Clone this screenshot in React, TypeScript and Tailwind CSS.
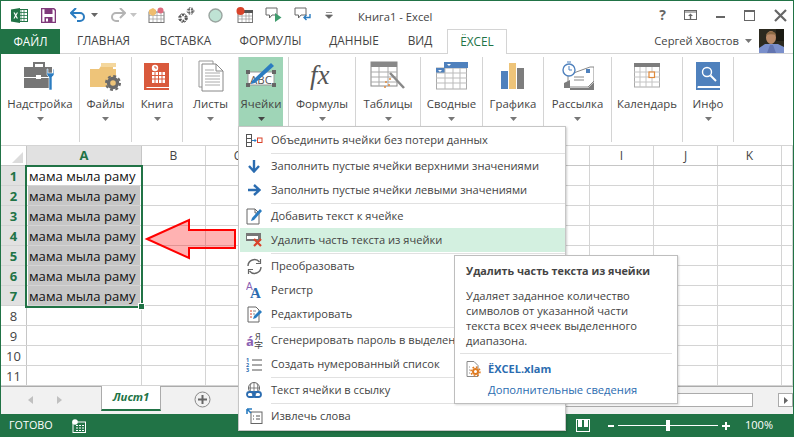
import { ReactNode } from "react";

function ExcelLogo() {
  return (
    <svg width="17" height="15" viewBox="0 0 17 15">
      <rect x="7" y="1.5" width="9.5" height="12" fill="#fff" stroke="#217346" />
      <path d="M10 1.5v12M13 1.5v12M7 4.5h9.5M7 7.5h9.5M7 10.5h9.5" stroke="#217346" strokeWidth="0.8" />
      <path d="M0 1.5 9 0v15L0 13.5z" fill="#217346" />
      <path d="M2.5 4.5 4 7.5 2.5 10.5h1.3l.9-2 .9 2H7L5.4 7.5 7 4.5H5.7l-.9 2-.9-2z" fill="#fff" />
    </svg>
  );
}

function SaveIcon() {
  return (
    <svg width="15" height="15" viewBox="0 0 15 15">
      <path d="M0.5 0.5h12l2 2v12h-14z" fill="#fff" stroke="#80397b" strokeWidth="1.6" />
      <rect x="3.5" y="1" width="8" height="5" fill="#80397b" />
      <rect x="3.5" y="9" width="8" height="5.5" fill="#80397b" />
      <rect x="5" y="10.5" width="2" height="3" fill="#fff" />
    </svg>
  );
}

function UndoIcon({ color }: { color: string }) {
  return (
    <svg width="16" height="14" viewBox="0 0 16 14">
      <path d="M1 5h9a4 4 0 0 1 0 8H7" fill="none" stroke={color} strokeWidth="2" />
      <path d="M6 0 1 5l5 5" fill="none" stroke={color} strokeWidth="2" />
    </svg>
  );
}

function TinyCaret({ color = "#666" }: { color?: string }) {
  return (
    <svg width="7" height="4" viewBox="0 0 7 4">
      <path d="M0 0h7L3.5 4z" fill={color} />
    </svg>
  );
}

function QuickIcons() {
  return (
    <div className="flex items-center">
      <div className="w-[10px]" />
      <ExcelLogo />
      <div className="w-[13px]" />
      <SaveIcon />
      <div className="w-[14px]" />
      <UndoIcon color="#2b7cc0" />
      <div className="w-[5px]" />
      <TinyCaret />
      <div className="w-[12px]" />
      <div className="-scale-x-100">
        <UndoIcon color="#b4b4b4" />
      </div>
      <div className="w-[4px]" />
      <TinyCaret color="#c4c4c4" />
      <div className="w-[11px]" />
      <svg width="17" height="16" viewBox="0 0 17 16">
        <rect x="1" y="5" width="15" height="10.5" fill="#fff" stroke="#777" />
        <path d="M1 8.5h15M1 12h15M5 5v10M9 5v10M13 5v10" stroke="#999" strokeWidth="0.7" />
        <path d="M1 3l4-2 3 2v4l-3 2-4-2z" fill="#eebc6d" />
        <circle cx="12.5" cy="3.5" r="3" fill="#dd6b7e" />
      </svg>
      <div className="w-[13px]" />
      <svg width="17" height="16" viewBox="0 0 17 16">
        <circle cx="5" cy="11" r="3" fill="none" stroke="#555" strokeWidth="2.5" strokeDasharray="2 1.2" />
        <circle cx="5" cy="11" r="4.3" fill="none" stroke="#555" strokeWidth="1" strokeDasharray="2 1.4" />
        <circle cx="12.5" cy="4" r="2" fill="none" stroke="#666" strokeWidth="2" strokeDasharray="2 1" />
        <circle cx="12.5" cy="4" r="3.4" fill="none" stroke="#666" strokeWidth="1" strokeDasharray="1.6 1.2" />
      </svg>
      <div className="w-[13px]" />
      <svg width="15" height="15" viewBox="0 0 15 15">
        <circle cx="7.5" cy="7.5" r="6.5" fill="#bfe3d4" stroke="#9aa5a0" strokeWidth="1.4" />
      </svg>
      <div className="w-[13px]" />
      <svg width="17" height="16" viewBox="0 0 17 16">
        <rect x="2" y="4" width="14.5" height="11.5" fill="#fff" stroke="#777" />
        <rect x="8" y="3" width="9" height="3" fill="#555" />
        <path d="M2 9h14M2 12h14M6 6v9M10 6v9M13 6v9" stroke="#999" strokeWidth="0.7" />
        <circle cx="4.5" cy="4" r="4" fill="#d9432a" />
      </svg>
      <div className="w-[12px]" />
      <svg width="17" height="16" viewBox="0 0 17 16">
        <path d="M1 1h11v7H7l-2.500 3V8H1z" fill="#fff" stroke="#666" />
        <path d="M10 6l6.500 4.500L10 15z" fill="#3f9c6d" />
      </svg>
      <div className="w-[12px]" />
      <svg width="17" height="16" viewBox="0 0 17 16">
        <path d="M1 1h11v7H7l-2.500 3V8H1z" fill="#fff" stroke="#666" />
        <path d="M16 7v3.500H10M12.500 8 10 10.500l2.500 2.500" fill="none" stroke="#2b7cc0" strokeWidth="1.400" />
      </svg>
      <div className="w-[14px]" />
      <svg width="8" height="8" viewBox="0 0 8 8">
        <path d="M1 1.500h6M0.500 4h7L4 7.500z" fill="#666" stroke="#666" strokeWidth="0.700" />
      </svg>
    </div>
  );
}

function TitleBar() {
  return (
    <div className="relative flex h-[28px] items-center justify-between">
      <QuickIcons />
      <div className="absolute left-[357px] top-[7px] text-[11.2px] leading-[18px] text-[#444]">Книга1 - Excel</div>
      <div className="flex items-center">
        <span className="mr-[18px] text-[14px] font-bold leading-none text-[#666]">?</span>
        <svg className="mr-[19px]" width="13" height="10" viewBox="0 0 13 10">
          <rect x="0.500" y="0.500" width="12" height="9" fill="none" stroke="#666" />
          <path d="M0.500 2h12" stroke="#666" />
          <path d="M6.500 3.500 4 6h5zM5.800 6h1.400v3H5.800z" fill="#666" />
        </svg>
        <div className="mr-[19px] mt-[3px] h-[2px] w-[9px] bg-[#666]" />
        <div className="mr-[19px] h-[11px] w-[11px] border border-t-2 border-[#666]" />
        <svg className="mr-[6px]" width="13" height="13" viewBox="0 0 13 13">
          <path d="M1 1l11 11M12 1 1 12" stroke="#666" strokeWidth="2.200" />
        </svg>
      </div>
    </div>
  );
}

function Avatar() {
  return (
    <svg width="25" height="24" viewBox="0 0 25 24">
      <rect width="25" height="24" fill="#2c2a1f" />
      <rect x="17" width="8" height="12" fill="#1b1a12" />
      <path d="M0 24v-5l6-4h13l6 3v6z" fill="#7a8fcb" />
      <path d="M8 24l3-8h3l3 8z" fill="#6274b0" />
      <ellipse cx="12" cy="8.500" rx="5" ry="6.500" fill="#b98a68" />
      <path d="M7 6c1-4 9-5 10 0-3-1-7-1-10 0z" fill="#8c6a45" />
    </svg>
  );
}

function TabBar() {
  const tabs = [
    { label: "ГЛАВНАЯ", width: "w-[83px]" },
    { label: "ВСТАВКА", width: "w-[81px]" },
    { label: "ФОРМУЛЫ", width: "w-[89px]" },
    { label: "ДАННЫЕ", width: "w-[78px]" },
    { label: "ВИД", width: "w-[54px]" },
  ];
  return (
    <div className="flex h-[25px] items-stretch border-b border-[#d4d4d4]">
      <div className="flex h-[25px] w-[59px] items-center justify-center bg-[#217346] text-[11.800px] text-white">ФАЙЛ</div>
      <div className="w-[2px]" />
      {tabs.map((t) => (
        <div key={t.label} className={`${t.width} flex items-center justify-center text-[11.800px] text-[#444]`}>
          {t.label}
        </div>
      ))}
      <div className="z-10 flex h-[25px] w-[60px] items-center justify-center border border-b-0 border-[#d4d4d4] bg-white text-[11.800px] text-[#217346]">
        ЁXCEL
      </div>
      <div className="flex flex-1 items-center justify-end">
        <span className="mr-[6px] text-[11.200px] text-[#444]">Сергей Хвостов</span>
        <span className="mr-[7px]"><TinyCaret color="#777" /></span>
        <span className="mr-[9px] block h-[24px]"><Avatar /></span>
      </div>
    </div>
  );
}

const ribbonIcons: Record<string, ReactNode> = {
  "Надстройка": (
    <svg width="32" height="30" viewBox="0 0 32 30">
      <path d="M10 6V2h10v4" fill="none" stroke="#767676" strokeWidth="2" />
      <rect x="0" y="6" width="28" height="10" fill="#767676" />
      <rect x="0" y="17" width="28" height="10" fill="#767676" />
      <rect x="12" y="14" width="5" height="4" fill="#fff" />
      <path d="M23 8v6l2 2v13h3V16l2-2V8h-1v4h-5V8z" fill="#2b7cc0" stroke="#fff" strokeWidth="0.600" />
    </svg>
  ),
  "Файлы": (
    <svg width="32" height="30" viewBox="0 0 32 30">
      <path d="M0 8h9l2-3h12v3h3v18H0z" fill="#eec479" />
      <rect x="11" y="2" width="15" height="4" fill="#f4d79d" />
      <circle cx="23" cy="22" r="4.500" fill="none" stroke="#6a6a6a" strokeWidth="3.400" />
      <circle cx="23" cy="22" r="7" fill="none" stroke="#6a6a6a" strokeWidth="2" strokeDasharray="3 2.500" />
    </svg>
  ),
  "Книга": (
    <svg width="26" height="30" viewBox="0 0 26 30">
      <path d="M0 2h25v24H3a2 2 0 0 0-1 1h23v2H0z" fill="#d9593c" />
      <circle cx="11" cy="7" r="3.200" fill="#fff" />
      <path d="M11 5v2h2" stroke="#d9593c" fill="none" />
      <rect x="8" y="11" width="13" height="11" fill="#fff" />
      <path d="M11 11v11M14.500 11v11M18 11v11M8 14.500h13M8 18h13" stroke="#d9593c" />
    </svg>
  ),
  "Листы": (
    <svg width="26" height="32" viewBox="0 0 26 32">
      <path d="M1 1h14v3M1 1v26h3" fill="none" stroke="#999" />
      <path d="M4 4h14l7 7v20H4z" fill="#fff" stroke="#888" />
      <path d="M18 4v7h7" fill="none" stroke="#888" />
      <path d="M7 10h9M7 13h15M7 16h15M7 19h15M7 22h15M7 25h15" stroke="#aaa" />
    </svg>
  ),
  "Ячейки": (
    <svg width="34" height="30" viewBox="0 0 34 30">
      <rect x="4" y="11" width="26" height="13" fill="#fff" stroke="#999" />
      <rect x="2" y="9" width="4" height="4" fill="#666" />
      <rect x="28" y="9" width="4" height="4" fill="#666" />
      <rect x="2" y="22" width="4" height="4" fill="#666" />
      <rect x="28" y="22" width="4" height="4" fill="#666" />
      <text x="17" y="22.500" textAnchor="middle" fontSize="11.500" fill="#555" fontFamily="'Open Sans',sans-serif">ABC</text>
      <path d="M8 20 27 2l3 3-19 17-4 1z" fill="#2b7cc0" />
    </svg>
  ),
  "Формулы": (
    <svg width="26" height="32" viewBox="0 0 26 32">
      <text x="1" y="24" fontSize="27" fontStyle="italic" fontFamily="'Liberation Serif',serif" fill="#555">fx</text>
    </svg>
  ),
  "Таблицы": (
    <svg width="36" height="32" viewBox="0 0 36 32">
      <rect x="1" y="2" width="26" height="24" fill="#fff" stroke="#888" />
      <rect x="1" y="2" width="26" height="5" fill="#888" />
      <path d="M1 12h26M1 17h26M1 22h26M9 7v19M18 7v19" stroke="#aaa" />
      <path d="M20 13l14 15" stroke="#888" strokeWidth="2.500" />
      <circle cx="16" cy="22" r="1" fill="#e08a3c" />
      <circle cx="19" cy="25" r="1" fill="#e08a3c" />
      <circle cx="15" cy="27" r="1" fill="#e08a3c" />
      <circle cx="20" cy="19" r="1" fill="#e08a3c" />
    </svg>
  ),
  "Сводные": (
    <svg width="32" height="28" viewBox="0 0 32 28">
      <rect x="0.500" y="6" width="30" height="21" fill="#fff" stroke="#aaa" />
      <rect x="0" y="6" width="9" height="5" fill="#4f81bd" />
      <rect x="8" y="0" width="24" height="6" fill="#4f81bd" />
      <path d="M9 6v21M17 6v21M24 6v21M0 11h31M0 16h31M0 21h31" stroke="#bbb" />
      <path d="M2 8h4L4 10zM11 2h4l-2 2z" fill="#fff" />
    </svg>
  ),
  "Графика": (
    <svg width="24" height="28" viewBox="0 0 24 28">
      <rect x="0" y="9" width="7" height="18" fill="#4f81bd" />
      <rect x="8" y="1" width="7" height="26" fill="#eec479" />
      <rect x="16" y="6" width="7" height="21" fill="#7d7d7d" />
    </svg>
  ),
  "Рассылка": (
    <svg width="32" height="30" viewBox="0 0 32 30">
      <path d="M6 14 28 6l4 0v14l-6 6H6z" fill="#fff" stroke="#888" />
      <rect x="24" y="8" width="4" height="4" fill="#4f81bd" />
      <path d="M12 16h10M12 19h10" stroke="#888" />
      <path d="M2 22l6-3v8H2zM8 27h18l6-6v8H8z" fill="#7d7d7d" />
      <circle cx="7" cy="9" r="6" fill="#fff" stroke="#4f81bd" strokeWidth="1.400" />
      <path d="M7 5v4h3M5 1h4" stroke="#4f81bd" fill="none" />
    </svg>
  ),
  "Календарь": (
    <svg width="26" height="25" viewBox="0 0 26 25">
      <rect x="0.500" y="1" width="25" height="23" fill="#fff" stroke="#aaa" />
      <rect x="0" y="0" width="26" height="4" fill="#7d7d7d" />
      <path d="M6 4v20M12 4v20M18 4v20M0 9h26M0 14h26M0 19h26" stroke="#c4c4c4" />
      <rect x="15" y="9" width="5.500" height="5.500" fill="#fff" stroke="#e08a3c" strokeWidth="1.200" />
    </svg>
  ),
  "Инфо": (
    <svg width="24" height="28" viewBox="0 0 24 28">
      <path d="M0 0h24v24H2a2 2 0 0 0-.500 2H24v2H0z" fill="#4f81bd" />
      <circle cx="11" cy="10" r="4.500" fill="none" stroke="#fff" strokeWidth="1.400" />
      <path d="M14.500 13.500 20 19" stroke="#fff" strokeWidth="2" />
    </svg>
  ),
};

const ribbonItems = [
  { label: "Надстройка", width: "w-[79px]" },
  { label: "Файлы", width: "w-[52px]" },
  { label: "Книга", width: "w-[51px]" },
  { label: "Листы", width: "w-[56px]" },
  { label: "Ячейки", width: "w-[50px]", active: true },
  { label: "Формулы", width: "w-[67px]" },
  { label: "Таблицы", width: "w-[65px]" },
  { label: "Сводные", width: "w-[62px]" },
  { label: "Графика", width: "w-[61px]" },
  { label: "Рассылка", width: "w-[68px]" },
  { label: "Календарь", width: "w-[71px]", noCaret: true },
  { label: "Инфо", width: "w-[51px]" },
];

function Ribbon() {
  return (
    <div className="flex h-[92px] border-b border-[#d4d4d4] pt-[3px]">
      {ribbonItems.map((item) => (
        <div key={item.label} className={`${item.width} h-[85px] border-r border-[#d4d4d4]`}>
          <div className={`flex h-[69px] flex-col items-center ${item.active ? "mr-[5px] bg-[#9fd5b7]" : ""}`}>
            <div className="flex h-[37px] items-center justify-center">{ribbonIcons[item.label]}</div>
            <div className="mt-[1px] text-[11.400px] leading-[18px] text-[#444]">{item.label}</div>
            {!item.noCaret && (
              <div className="mt-[4px] flex">
                <TinyCaret color={item.active ? "#444" : "#777"} />
              </div>
            )}
          </div>
        </div>
      ))}
    </div>
  );
}

const columns = [
  { label: "B", width: "w-[64px]" },
  { label: "C", width: "w-[64px]" },
  { label: "D", width: "w-[64px]" },
  { label: "E", width: "w-[64px]" },
  { label: "F", width: "w-[64px]" },
  { label: "G", width: "w-[64px]" },
  { label: "H", width: "w-[64px]" },
  { label: "I", width: "w-[64px]" },
  { label: "J", width: "w-[64px]" },
  { label: "K", width: "w-[64px]" },
  { label: "", width: "flex-1" },
];

function Sheet() {
  const rows = [1, 2, 3, 4, 5, 6, 7, 8, 9, 10, 11];
  return (
    <div className="relative">
      <div className="flex h-[20px] border-b border-[#c6c6c6]">
        <div className="relative w-[26px] border-r border-[#c6c6c6]">
          <div className="absolute bottom-[2px] right-[3px] h-0 w-0 border-b-[11px] border-l-[11px] border-b-[#dcdcdc] border-l-transparent" />
        </div>
        <div className="flex w-[115px] items-center justify-center border-r border-[#c6c6c6] bg-[#e1e1e1] pt-[1px] text-[13px] font-bold text-[#217346]">
          A
        </div>
        {columns.map((c) => (
          <div key={c.label} className={`${c.width} flex items-center justify-center border-r border-[#d4d4d4] pt-[1px] text-[12px] text-[#444]`}>
            {c.label}
          </div>
        ))}
      </div>
      {rows.map((n) => {
        const selected = n <= 7;
        return (
          <div key={n} className="flex h-[20px] border-b border-[#d4d4d4]">
            <div
              className={`flex w-[26px] items-center justify-center border-r border-[#c6c6c6] pt-[3px] text-[13px] ${
                selected ? "bg-[#e1e1e1] font-bold text-[#217346]" : "text-[#444]"
              }`}
            >
              {n}
            </div>
            <div className="w-[115px] border-r border-[#d4d4d4]">
              {selected && (
                <div
                  className={`flex h-[19px] items-center pl-[2px] pt-[3px] text-[13.100px] text-[#111] ${
                    n > 1 ? "ml-[1px] mr-[1px] bg-[#c6c6c6] !pl-[1px]" : ""
                  }`}
                >
                  мама мыла раму
                </div>
              )}
            </div>
            {columns.map((c) => (
              <div key={c.label} className={`${c.width} border-r border-[#d4d4d4]`} />
            ))}
          </div>
        );
      })}
      {/* selection frame */}
      <div className="absolute left-[24px] top-[19px] h-[143px] w-[118px] border-2 border-[#217346]" />
      <div className="absolute left-[137px] top-[157px] h-[7px] w-[7px] border border-white bg-[#217346]" />
      {/* callout arrow */}
      <svg className="absolute left-[143px] top-[71px]" width="94" height="44" viewBox="0 0 94 44">
        <path d="M3 22 45 3v10h46v18H45v10z" fill="rgba(255,0,0,0.3)" stroke="#ff0000" strokeWidth="2" />
      </svg>
    </div>
  );
}

function SheetTabs() {
  return (
    <div className="flex h-[28px] items-stretch border-t border-[#ababab] bg-[#f1f1f1]">
      <div className="flex w-[100px] items-center pb-[2px] pl-[27px]">
        <svg width="5" height="8" viewBox="0 0 5 8"><path d="M5 0v8L0 4z" fill="#c0c0c0" /></svg>
        <div className="w-[24px]" />
        <svg width="5" height="8" viewBox="0 0 5 8"><path d="M0 0v8l5-4z" fill="#c0c0c0" /></svg>
      </div>
      <div className="-mt-[1px] flex h-[25px] w-[60px] items-center justify-center self-start border-x border-b-2 border-[#ababab] border-b-[#217346] bg-white text-[11.300px] font-bold italic text-[#217346]">
        Лист1
      </div>
      <div className="flex w-[83px] items-center justify-center pb-[2px]">
        <svg width="17" height="17" viewBox="0 0 17 17">
          <circle cx="8.500" cy="8.500" r="7.500" fill="none" stroke="#888" />
          <path d="M8.500 4v9M4 8.500h9" stroke="#666" strokeWidth="2" />
        </svg>
      </div>
      <div className="flex flex-1 items-center justify-end pb-[1px]">
        <div className="h-[14px] w-[300px] border border-[#ababab] bg-white" />
        <div className="w-[25px]" />
        <div className="flex h-[14px] w-[15px] items-center justify-center border border-[#ababab] bg-white">
          <svg width="4" height="7" viewBox="0 0 4 7"><path d="M0 0v7l4-3.500z" fill="#666" /></svg>
        </div>
      </div>
    </div>
  );
}

function StatusBar() {
  return (
    <div className="flex h-[23px] items-center bg-[#217346] pl-[8px] text-white">
      <span className="text-[10.800px]">ГОТОВО</span>
      <svg className="ml-[19px]" width="14" height="14" viewBox="0 0 14 14">
        <rect x="1" y="3" width="12.500" height="10.500" fill="none" stroke="#fff" />
        <path d="M4 6.500h8M4 9h8M4 11.500h8" stroke="#fff" strokeDasharray="2 1" />
        <circle cx="3" cy="3" r="2.800" fill="#fff" />
      </svg>
      <div className="flex flex-1 items-center justify-end">
        <svg className="mr-[18px]" width="14" height="13" viewBox="0 0 14 13">
          <rect x="0.500" y="0.500" width="13" height="12" fill="none" stroke="#fff" />
          <path d="M2 1h4v7H2zM8 1h4v7H8z" fill="#fff" />
        </svg>
        <div className="h-[2px] w-[6px] bg-white" />
        <div className="relative ml-[4px] h-[1px] w-[100px] bg-white">
          <div className="absolute left-[48px] top-[-5px] h-[11px] w-[4px] bg-white" />
        </div>
        <svg className="ml-[4px]" width="8" height="8" viewBox="0 0 8 8">
          <path d="M4 0v8M0 4h8" stroke="#fff" strokeWidth="2" />
        </svg>
        <span className="ml-[15px] mr-[20px] text-[11px]">100%</span>
      </div>
    </div>
  );
}

const menuIcons: Record<string, ReactNode> = {
  merge: (
    <svg width="17" height="13" viewBox="0 0 17 13">
      <rect x="0.500" y="0.500" width="5" height="12" fill="#fff" stroke="#555" />
      <path d="M0 4.500h6M0 8.500h6" stroke="#555" />
      <path d="M6 6.500h4M8.500 5l1.500 1.500L8.500 8" fill="none" stroke="#2b7cc0" />
      <rect x="11.500" y="4" width="4.500" height="4.500" fill="#fff" stroke="#d9432a" />
    </svg>
  ),
  down: (
    <svg width="12" height="13" viewBox="0 0 12 13">
      <path d="M6 0v11M1 6l5 5.500L11 6" fill="none" stroke="#2b6cb0" strokeWidth="2.400" />
    </svg>
  ),
  right: (
    <svg width="13" height="12" viewBox="0 0 13 12">
      <path d="M0 6h11M6 1l5.500 5L6 11" fill="none" stroke="#2b6cb0" strokeWidth="2.400" />
    </svg>
  ),
  add: (
    <svg width="17" height="17" viewBox="0 0 17 17">
      <path d="M1 1h8l4 4v11H1z" fill="#fff" stroke="#666" />
      <path d="M9 1v4h4" fill="none" stroke="#666" />
      <path d="M5 13l1-3 8-9 2 2-8 9z" fill="#2b7cc0" />
    </svg>
  ),
  remove: (
    <svg width="17" height="14" viewBox="0 0 17 14">
      <rect x="0" y="0" width="15" height="8" fill="#777" />
      <rect x="1" y="3" width="11" height="3" fill="#fff" />
      <path d="M8 6l7 7M15 6l-7 7" stroke="#d9432a" strokeWidth="2.200" />
    </svg>
  ),
  convert: (
    <svg width="17" height="17" viewBox="0 0 17 17">
      <path d="M2 8a6.500 6.500 0 0 1 11.500-4" fill="none" stroke="#666" strokeWidth="1.400" />
      <path d="M15 9a6.500 6.500 0 0 1-11.500 4" fill="none" stroke="#666" strokeWidth="1.400" />
      <path d="M14.500 1v4.500H10M2.500 16v-4.500H7" fill="none" stroke="#666" strokeWidth="1.200" />
    </svg>
  ),
  caseIcon: (
    <svg width="16" height="16" viewBox="0 0 16 16">
      <text x="0" y="8" fontSize="10" fill="#8a5fb3" fontFamily="'Liberation Sans',sans-serif">A</text>
      <text x="4" y="16" fontSize="15" fontWeight="bold" fill="#2b6cb0" fontFamily="'Liberation Serif',serif">A</text>
    </svg>
  ),
  edit: (
    <svg width="17" height="17" viewBox="0 0 17 17">
      <path d="M2 1h8l3 3v12H2z" fill="#fff" stroke="#666" />
      <path d="M4 5h2M4 8h2M4 11h2" stroke="#d9432a" />
      <path d="M7 5h3M7 8h2" stroke="#888" />
      <path d="M7 13l1-3 6-6 2 2-6 6z" fill="#2b7cc0" />
    </svg>
  ),
  password: (
    <svg width="17" height="17" viewBox="0 0 17 17">
      <text x="0" y="14" fontSize="13" fontWeight="bold" fill="#8a5fb3" fontFamily="'Open Sans',sans-serif">á</text>
      <text x="9" y="8" fontSize="9" fill="#444" fontFamily="'Open Sans',sans-serif">Я</text>
      <text x="8" y="17" fontSize="9" fill="#444" fontFamily="'Noto Sans CJK SC',sans-serif">字</text>
    </svg>
  ),
  numbered: (
    <svg width="16" height="15" viewBox="0 0 16 15">
      <text x="0" y="5" fontSize="5.500" fontWeight="bold" fill="#2b6cb0" fontFamily="'Open Sans',sans-serif">1</text>
      <text x="0" y="10" fontSize="5.500" fontWeight="bold" fill="#2b6cb0" fontFamily="'Open Sans',sans-serif">2</text>
      <text x="0" y="15" fontSize="5.500" fontWeight="bold" fill="#2b6cb0" fontFamily="'Open Sans',sans-serif">3</text>
      <path d="M6 3h10M6 8h10M6 13h10" stroke="#555" />
    </svg>
  ),
  link: (
    <svg width="17" height="17" viewBox="0 0 17 17">
      <circle cx="8" cy="6" r="5.500" fill="none" stroke="#666" />
      <path d="M2.500 6h11M8 .5v11M5 1.500c-1 3-1 6 0 9M11 1.500c1 3 1 6 0 9" fill="none" stroke="#666" strokeWidth="0.800" />
      <rect x="1" y="10" width="8" height="5" rx="2.500" fill="none" stroke="#2b6cb0" strokeWidth="1.800" />
      <rect x="7" y="10" width="8" height="5" rx="2.500" fill="none" stroke="#2b6cb0" strokeWidth="1.800" />
    </svg>
  ),
  extract: (
    <svg width="17" height="16" viewBox="0 0 17 16">
      <rect x="5" y="4" width="11" height="11.500" fill="#fff" stroke="#666" />
      <path d="M7 8h1M10 8h4M7 11h1M10 11h4" stroke="#555" />
      <path d="M1 6V1M1 1h5M1 1l4 4" fill="none" stroke="#2b7cc0" strokeWidth="1.600" />
    </svg>
  ),
};

const menuItems = [
  { icon: "merge", label: "Объединить ячейки без потери данных", sep: true },
  { icon: "down", label: "Заполнить пустые ячейки верхними значениями" },
  { icon: "right", label: "Заполнить пустые ячейки левыми значениями", sep: true },
  { icon: "add", label: "Добавить текст к ячейке" },
  { icon: "remove", label: "Удалить часть текста из ячейки", active: true, sep: true },
  { icon: "convert", label: "Преобразовать" },
  { icon: "caseIcon", label: "Регистр" },
  { icon: "edit", label: "Редактировать", sep: true },
  { icon: "password", label: "Сгенерировать пароль в выделенных ячейках" },
  { icon: "numbered", label: "Создать нумерованный список", sep: true },
  { icon: "link", label: "Текст ячейки в ссылку", sep: true },
  { icon: "extract", label: "Извлечь слова" },
];

function CellsMenu() {
  return (
    <div className="absolute left-[237px] top-[125px] z-20 h-[305px] w-[328px] border border-[#c6c6c6] bg-white py-[1px] pl-[1px] shadow-[1px_1px_2px_rgba(0,0,0,0.2)]">
      {menuItems.map((item) => (
        <div key={item.label}>
          <div className={`flex h-[24px] items-center whitespace-nowrap ${item.active ? "bg-[#d3f0e0]" : ""}`}>
            <div className="flex w-[31px] shrink-0 items-center justify-center pr-[3px]">{menuIcons[item.icon]}</div>
            <span className="text-[11.100px] text-[#444]">{item.label}</span>
          </div>
          {item.sep && <div className="ml-[31px] h-[2px] border-b border-[#e1e1e1]" />}
        </div>
      ))}
    </div>
  );
}

function Tooltip() {
  return (
    <div className="absolute left-[453px] top-[254px] z-30 h-[149px] w-[224px] border border-[#bebebe] bg-white px-[11px] pt-[6px] text-[11.200px] text-[#444] shadow-[1px_1px_2px_rgba(0,0,0,0.15)]">
      <div className="whitespace-nowrap text-[10.800px] font-bold leading-[18px]">Удалить часть текста из ячейки</div>
      <div className="mt-[8px] leading-[15px]">
        Удаляет заданное количество<br />
        символов от указанной части<br />
        текста всех ячеек выделенного<br />
        диапазона.
      </div>
      <div className="-mx-[6px] mt-[5px] h-[1px] bg-[#e1e1e1]" />
      <div className="mt-[7px] flex items-center">
        <svg width="15" height="16" viewBox="0 0 15 16">
          <path d="M1 .5h7l4 4V15.500H1z" fill="#fff" stroke="#888" />
          <circle cx="9.500" cy="10.500" r="2.500" fill="none" stroke="#e07b20" strokeWidth="2" />
          <circle cx="9.500" cy="10.500" r="4.500" fill="none" stroke="#e07b20" strokeWidth="1.500" strokeDasharray="1.800 1.700" />
          <path d="M3 6h1M3 9h1M3 12h1" stroke="#999" />
        </svg>
        <span className="ml-[7px] text-[11px] font-bold text-[#2b6cb0]">ЁXCEL.xlam</span>
      </div>
      <div className="ml-[22px] mt-[4px] text-[#2b6cb0]">Дополнительные сведения</div>
    </div>
  );
}

export default function App() {
  return (
    <div className="relative h-[437px] w-[794px] overflow-hidden border-x border-t border-[#217346] bg-white font-['Open_Sans',sans-serif]">
      <TitleBar />
      <TabBar />
      <Ribbon />
      <Sheet />
      <SheetTabs />
      <StatusBar />
      <CellsMenu />
      <Tooltip />
    </div>
  );
}
